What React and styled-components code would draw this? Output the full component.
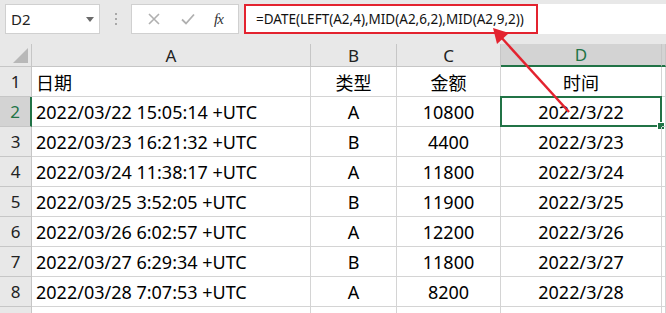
import React from "react";
import styled, { createGlobalStyle } from "styled-components";

const GlobalStyle = createGlobalStyle`
  html, body {
    margin: 0;
    padding: 0;
    background: #e8e8e8;
  }
  body {
    font-family: "Noto Sans", "Noto Sans CJK SC", sans-serif;
  }
`;

const Page = styled.div`
  position: relative;
  width: 666px;
  height: 313px;
  overflow: hidden;
  background: #e8e8e8;
`;

const FormulaRow = styled.div`
  display: flex;
  align-items: stretch;
  height: 30px;
  padding: 4px 0 10px 5px;
`;

const NameBox = styled.div`
  width: 95px;
  display: flex;
  align-items: center;
  justify-content: space-between;
  padding: 0 5px 0 5px;
  box-sizing: border-box;
  background: #fff;
  border: 1px solid #d0d0d0;
  font-size: 15px;
  color: #222;
`;

const Caret = styled.span`
  width: 0;
  height: 0;
  border-left: 4px solid transparent;
  border-right: 4px solid transparent;
  border-top: 5px solid #6a6a6a;
`;

const Grip = styled.div`
  width: 31px;
  display: flex;
  flex-direction: column;
  align-items: center;
  justify-content: center;
  gap: 3px;
  span {
    width: 2px;
    height: 2px;
    background: #a8a8a8;
  }
`;

const ButtonBox = styled.div`
  width: 108px;
  display: flex;
  align-items: center;
  justify-content: space-around;
  padding: 0 6px;
  box-sizing: border-box;
  background: #fff;
  border: 1px solid #d0d0d0;
`;

const Fx = styled.span`
  font-family: "Liberation Serif", serif;
  font-style: italic;
  font-size: 15px;
  color: #333;
  letter-spacing: -1px;
`;

const FormulaInput = styled.div`
  flex: 1;
  margin-left: 5px;
  display: flex;
  align-items: stretch;
  background: #fff;
`;

const Highlight = styled.div`
  display: flex;
  align-items: center;
  padding: 0 12px 0 10px;
  border: 2px solid #e3232f;
  font-size: 13.5px;
  color: #111;
  white-space: nowrap;
`;

const Sheet = styled.div`
  display: grid;
  grid-template-columns: 32px 279px 86px 104px 161px 4px;
  grid-template-rows: 23px repeat(9, 30px);
  background: #fff;
`;

const Corner = styled.div`
  position: relative;
  background: #e8e8e8;
  border-right: 1px solid #c6c6c6;
  border-bottom: 1px solid #c6c6c6;
  box-sizing: border-box;
  &::after {
    content: "";
    position: absolute;
    right: 3px;
    bottom: 3px;
    width: 0;
    height: 0;
    border-left: 15px solid transparent;
    border-bottom: 15px solid #b8b8b8;
  }
`;

const ColHead = styled.div`
  display: flex;
  align-items: center;
  justify-content: center;
  box-sizing: border-box;
  font-size: 17px;
  background: ${(p) => (p.$active ? "#d3d3d3" : "#e8e8e8")};
  color: ${(p) => (p.$active ? "#217346" : "#222")};
  border-right: 1px solid #c6c6c6;
  border-bottom: ${(p) => (p.$active ? "2px solid #217346" : "1px solid #c6c6c6")};
`;

const RowHead = styled.div`
  display: flex;
  align-items: center;
  justify-content: center;
  box-sizing: border-box;
  font-size: 17px;
  background: ${(p) => (p.$active ? "#d3d3d3" : "#e8e8e8")};
  color: ${(p) => (p.$active ? "#217346" : "#222")};
  border-bottom: 1px solid #c6c6c6;
  border-right: ${(p) => (p.$active ? "2px solid #217346" : "1px solid #c6c6c6")};
`;

const Cell = styled.div`
  position: relative;
  display: flex;
  align-items: center;
  justify-content: ${(p) => (p.$left ? "flex-start" : "center")};
  padding-left: ${(p) => (p.$left ? "4px" : "0")};
  box-sizing: border-box;
  font-size: 18px;
  color: #000;
  white-space: nowrap;
  border-right: 1px solid #d4d4d4;
  border-bottom: 1px solid #d4d4d4;
`;

const Selection = styled.div`
  position: absolute;
  left: -1px;
  top: -1px;
  right: -1px;
  bottom: -1px;
  border: 2px solid #217346;
  pointer-events: none;
  &::after {
    content: "";
    position: absolute;
    right: -5px;
    bottom: -5px;
    width: 6px;
    height: 6px;
    background: #217346;
    border: 1px solid #fff;
  }
`;

const Arrow = styled.svg`
  position: absolute;
  left: 0;
  top: 0;
  pointer-events: none;
`;

const rows = [
  ["2022/03/22 15:05:14 +UTC", "A", "10800", "2022/3/22"],
  ["2022/03/23 16:21:32 +UTC", "B", "4400", "2022/3/23"],
  ["2022/03/24 11:38:17 +UTC", "A", "11800", "2022/3/24"],
  ["2022/03/25 3:52:05 +UTC", "B", "11900", "2022/3/25"],
  ["2022/03/26 6:02:57 +UTC", "A", "12200", "2022/3/26"],
  ["2022/03/27 6:29:34 +UTC", "B", "11800", "2022/3/27"],
  ["2022/03/28 7:07:53 +UTC", "A", "8200", "2022/3/28"],
];

export default function App() {
  return (
    <Page>
      <GlobalStyle />
      <FormulaRow>
        <NameBox>
          D2
          <Caret />
        </NameBox>
        <Grip>
          <span />
          <span />
          <span />
        </Grip>
        <ButtonBox>
          <svg width="14" height="14" viewBox="0 0 14 14">
            <path d="M2 2L12 12M12 2L2 12" stroke="#b0b0b0" strokeWidth="1.6" />
          </svg>
          <svg width="16" height="14" viewBox="0 0 16 14">
            <path d="M2 7.5L6 11.5L14 2.5" stroke="#b0b0b0" strokeWidth="1.8" fill="none" />
          </svg>
          <Fx>fx</Fx>
        </ButtonBox>
        <FormulaInput>
          <Highlight>=DATE(LEFT(A2,4),MID(A2,6,2),MID(A2,9,2))</Highlight>
        </FormulaInput>
      </FormulaRow>
      <Sheet>
        <Corner />
        <ColHead>A</ColHead>
        <ColHead>B</ColHead>
        <ColHead>C</ColHead>
        <ColHead $active>D</ColHead>
        <ColHead $active />

        <RowHead>1</RowHead>
        <Cell $left>日期</Cell>
        <Cell>类型</Cell>
        <Cell>金额</Cell>
        <Cell>时间</Cell>
        <Cell />

        {rows.map((r, i) => (
          <React.Fragment key={i}>
            <RowHead $active={i === 0}>{i + 2}</RowHead>
            <Cell $left>{r[0]}</Cell>
            <Cell>{r[1]}</Cell>
            <Cell>{r[2]}</Cell>
            <Cell>
              {r[3]}
              {i === 0 && <Selection />}
            </Cell>
            <Cell />
          </React.Fragment>
        ))}

        <RowHead />
        <Cell />
        <Cell />
        <Cell />
        <Cell />
        <Cell />
      </Sheet>
      <Arrow width="666" height="313" viewBox="0 0 666 313">
        <line x1="569" y1="112" x2="500" y2="36" stroke="#e3232f" strokeWidth="2.5" />
        <polygon points="493,28 497,44 509,33" fill="#e3232f" />
      </Arrow>
    </Page>
  );
}
